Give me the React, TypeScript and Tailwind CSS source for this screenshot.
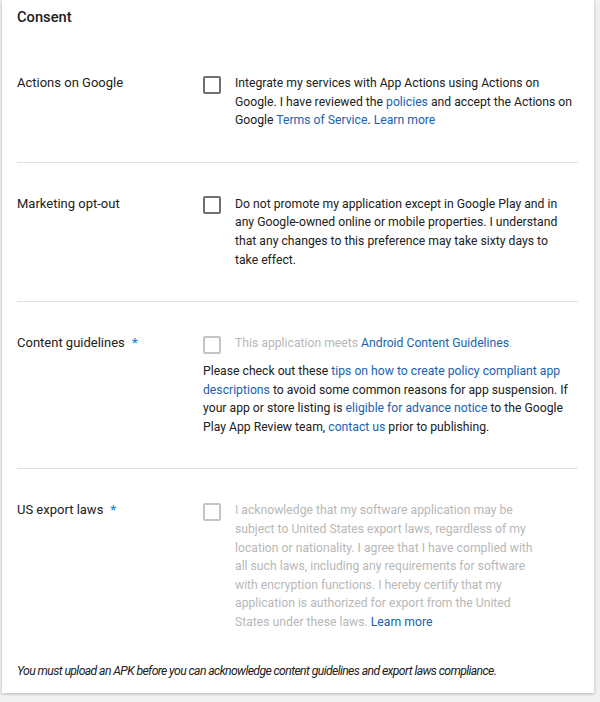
import React from "react";

const A = ({ children }: { children: React.ReactNode }) => (
  <span className="text-[#1a62b0]">{children}</span>
);

const Box = ({ disabled }: { disabled?: boolean }) => (
  <div
    className={
      "mt-[1.5px] h-[18px] w-[18px] shrink-0 rounded-[2px] border-2 " +
      (disabled ? "border-[#c4c4c4]" : "border-[#6f6f6f]")
    }
  />
);

const Label = ({ children, req }: { children: React.ReactNode; req?: boolean }) => (
  <div className="w-[186px] shrink-0 text-[13px] text-[#212121]">
    {children}
    {req && <span className="ml-[7px] font-bold text-[#1e88e5]">*</span>}
  </div>
);

export default function App() {
  return (
    <div
      className="h-[702px] w-[600px] bg-[#f0f0f0] pl-[2px] pr-[6px] text-[12.2px] leading-[18.6px] text-[#212121]"
      style={{ fontFamily: "Roboto, 'Liberation Sans', sans-serif" }}
    >
      <div className="bg-white pl-[15px] pr-[16px] pb-[13px] shadow-[0_1px_3px_rgba(0,0,0,0.25)]">
        <div className="pt-[5px] pb-[13px] text-[14.7px] font-medium leading-[24px] text-[#212121]">
          Consent
        </div>

        <div className="flex border-b border-[#e0e0e0] pt-[32px] pb-[32px]">
          <Label>Actions on Google</Label>
          <div className="flex gap-[14px]">
            <Box />
            <div className="max-w-[342px]">
              Integrate my services with App Actions using Actions on Google. I have reviewed the{" "}
              <A>policies</A> and accept the Actions on Google <A>Terms of Service</A>.{" "}
              <A>Learn more</A>
            </div>
          </div>
        </div>

        <div className="flex border-b border-[#e0e0e0] pt-[32px] pb-[32px]">
          <Label>Marketing opt-out</Label>
          <div className="flex gap-[14px]">
            <Box />
            <div className="max-w-[332px]">
              Do not promote my application except in Google Play and in any Google-owned online or
              mobile properties. I understand that any changes to this preference may take sixty
              days to take effect.
            </div>
          </div>
        </div>

        <div className="flex border-b border-[#e0e0e0] pt-[32px] pb-[32px]">
          <Label req>Content guidelines</Label>
          <div className="flex flex-col gap-[8.4px]">
            <div className="flex gap-[14px]">
              <Box disabled />
              <div className="text-[#b8b8b8]">
                This application meets <A>Android Content Guidelines</A>.
              </div>
            </div>
            <div>
              Please check out these <A>tips on how to create policy compliant app descriptions</A> to
              avoid some common reasons for app suspension. If your app or store listing is{" "}
              <A>eligible for advance notice</A> to the Google Play App Review team,{" "}
              <A>contact us</A> prior to publishing.
            </div>
          </div>
        </div>

        <div className="flex pt-[32px] pb-[30px]">
          <Label req>US export laws</Label>
          <div className="flex gap-[14px]">
            <Box disabled />
            <div className="max-w-[305px] text-[#b8b8b8]">
              I acknowledge that my software application may be subject to United States export
              laws, regardless of my location or nationality. I agree that I have complied with all
              such laws, including any requirements for software with encryption functions. I hereby
              certify that my application is authorized for export from the United States under
              these laws. <A>Learn more</A>
            </div>
          </div>
        </div>

        <div className="text-[12.2px] italic tracking-[-0.6px] text-[#212121]">
          You must upload an APK before you can acknowledge content guidelines and export laws
          compliance.
        </div>
      </div>
    </div>
  );
}
